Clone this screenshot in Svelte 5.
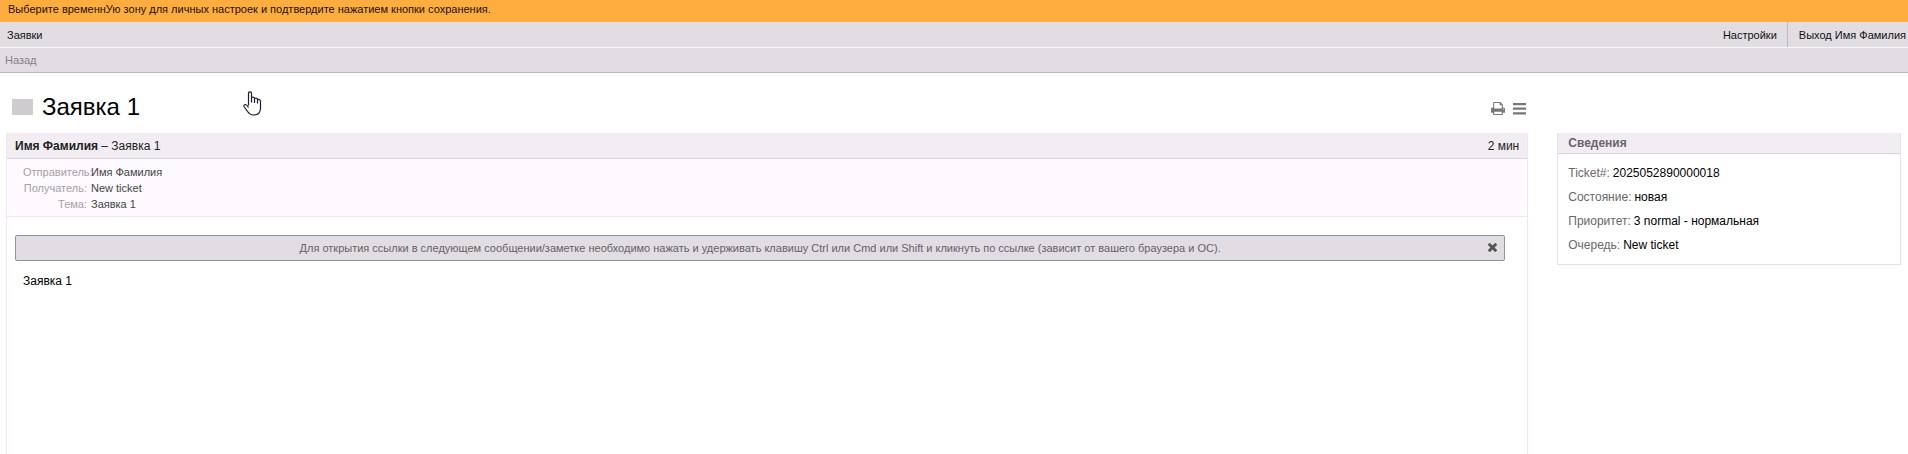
<script lang="ts">
	type Field = { label: string; value: string };

	const meta: Field[] = [
		{ label: 'Отправитель:', value: 'Имя Фамилия' },
		{ label: 'Получатель:', value: 'New ticket' },
		{ label: 'Тема:', value: 'Заявка 1' }
	];

	const details: Field[] = [
		{ label: 'Ticket#:', value: '2025052890000018' },
		{ label: 'Состояние:', value: 'новая' },
		{ label: 'Приоритет:', value: '3 normal - нормальная' },
		{ label: 'Очередь:', value: 'New ticket' }
	];

	let showHint = $state(true);
</script>

<div class="page">
	<a href="#preferences" class="notify">
		Выберите временнУю зону для личных настроек и подтвердите нажатием кнопки сохранения.
	</a>

	<nav class="nav">
		<a href="#tickets">Заявки</a>
		<div class="nav-user">
			<a href="#preferences" class="preferences">Настройки</a>
			<a href="#logout" class="logout">Выход Имя Фамилия</a>
		</div>
	</nav>

	<div class="subnav">
		<a href="#back">Назад</a>
	</div>

	<div class="content">
		<header class="title-row">
			<span class="flag"></span>
			<h1>Заявка 1</h1>
			<div class="actions">
				<button type="button" aria-label="Печать">
					<svg width="14" height="13" viewBox="64 128 1664 1536">
						<path d="M448 1536h896v-256h-896v256zm0-640h896v-384h-160q-40 0-68-28t-28-68v-160h-640v640zm1152 64q0-26-19-45t-45-19-45 19-19 45 19 45 45 19 45-19 19-45zm128 0v416q0 13-9.5 22.5t-22.5 9.5h-224v160q0 40-28 68t-68 28h-960q-40 0-68-28t-28-68v-160h-224q-13 0-22.5-9.5t-9.5-22.5v-416q0-79 56.5-135.5t135.5-56.5h64v-544q0-40 28-68t68-28h672q40 0 88 20t76 48l152 152q28 28 48 76t20 88v256h64q79 0 135.5 56.5t56.5 135.5z" />
					</svg>
				</button>
				<button type="button" aria-label="Меню">
					<svg width="13" height="13" viewBox="0 0 13 13">
						<path d="M0 1h13v2.2H0zM0 5.6h13v2.2H0zM0 10.2h13v2.2H0z" />
					</svg>
				</button>
			</div>
		</header>

		<article class="message">
			<header class="message-header">
				<span><strong>Имя Фамилия</strong> – Заявка 1</span>
				<time>2 мин</time>
			</header>
			<dl class="meta">
				{#each meta as field}
					<div>
						<dt>{field.label}</dt>
						<dd>{field.value}</dd>
					</div>
				{/each}
			</dl>
			{#if showHint}
				<div class="hint">
					<p>Для открытия ссылки в следующем сообщении/заметке необходимо нажать и удерживать клавишу Ctrl или Cmd или Shift и кликнуть по ссылке (зависит от вашего браузера и ОС).</p>
					<button type="button" aria-label="Закрыть" onclick={() => (showHint = false)}>
						<svg width="9" height="9" viewBox="302 366 1188 1188">
							<path d="M1490 1322q0 40-28 68l-136 136q-28 28-68 28t-68-28l-294-294-294 294q-28 28-68 28t-68-28l-136-136q-28-28-28-68t28-68l294-294-294-294q-28-28-28-68t28-68l136-136q28-28 68-28t68 28l294 294 294-294q28-28 68-28t68 28l136 136q28 28 28 68t-28 68l-294 294 294 294q28 28 28 68z" />
						</svg>
					</button>
				</div>
			{/if}
			<p class="body">Заявка 1</p>
		</article>

		<aside class="widget">
			<h2>Сведения</h2>
			<dl>
				{#each details as field}
					<div>
						<dt>{field.label}</dt>
						<dd>{field.value}</dd>
					</div>
				{/each}
			</dl>
		</aside>
	</div>

	<svg class="pointer" width="19" height="25" viewBox="0 0 19 25">
		<path d="M5.5 14.5V2.4Q5.5 .8 7 .8T8.500 2.400V6.500Q11.200 5.500 11.500 7.500Q14.200 6.500 14.500 8.500Q17.500 7.800 17.500 10.500V17Q17.500 24 10.500 24Q7 24 4.500 20.500L1 15.500Q.5 13.500 2.500 13.500Q4 13.700 5.500 16.500M8.500 6v5.500M11.500 7.500v4.500M14.500 8.500v4" />
	</svg>
</div>

<style>
	:global(body) {
		margin: 0;
		background: #fff;
	}

	.page {
		position: relative;
		display: flex;
		flex-direction: column;
		min-height: 100vh;
		font-family: 'Liberation Sans', Arial, sans-serif;
		font-size: 12px;
		line-height: 16px;
		color: #000;
	}

	a {
		color: inherit;
		text-decoration: none;
	}

	h1,
	h2,
	p,
	dl,
	dd {
		margin: 0;
	}

	button {
		display: flex;
		padding: 0;
		border: 0;
		background: none;
		cursor: pointer;
	}

	.notify {
		padding: 1px 8px 5px;
		background: #ffad3f;
		font-size: 11px;
		color: #1c1005;
	}

	.nav {
		display: flex;
		justify-content: space-between;
		padding-left: 7px;
		border-bottom: 1px solid #f8f6f8;
		background: #e2dde3;
		font-size: 11px;
		line-height: 24px;
		color: #111;
	}

	.nav a {
		padding-top: 1px;
	}

	.nav-user {
		display: flex;
	}

	.nav .preferences {
		padding-right: 10px;
		border-right: 1px solid #bdb9be;
	}

	.nav .logout {
		padding-left: 11px;
		padding-right: 2px;
	}

	.subnav {
		padding-left: 5px;
		border-bottom: 1px solid #bbb8bc;
		background: #e2dde3;
		font-size: 11px;
		line-height: 24px;
		color: #858087;
	}

	.content {
		flex: 1;
		display: grid;
		grid-template-columns: 31fr 7fr;
		grid-template-rows: 60px 1fr;
		column-gap: 29px;
		padding: 0 7px 0 6px;
	}

	.title-row {
		grid-column: 1;
		display: flex;
		align-items: center;
		padding: 7px 2px 0 6px;
	}

	.flag {
		width: 21px;
		height: 16px;
		margin-right: 9px;
		background: #d0cbce;
	}

	h1 {
		flex: 1;
		font-size: 24px;
		font-weight: 400;
		line-height: 28px;
	}

	.actions {
		display: flex;
		gap: 8px;
		padding-top: 4px;
		fill: #777;
	}

	.message {
		grid-column: 1;
		border: solid #eee7ef;
		border-width: 0 1px;
	}

	.message-header {
		display: flex;
		justify-content: space-between;
		padding: 1px 8px 0;
		border-bottom: 1px solid #dad5db;
		background: #f1edf2;
		line-height: 24px;
		color: #222;
	}

	.meta {
		padding: 5px 16px 4px;
		border-bottom: 1px solid #eee7ef;
		background: #fefaff;
		font-size: 11px;
		color: #444;
	}

	.meta > div {
		display: grid;
		grid-template-columns: 64px 1fr;
		column-gap: 4px;
	}

	.meta dt {
		text-align: right;
		white-space: nowrap;
		color: #a5a0a6;
	}

	.hint {
		display: flex;
		align-items: center;
		margin: 18px 22px 0 8px;
		border: 1px solid #96929a;
		border-radius: 2px;
		background: #e2dde3;
		font-size: 11px;
		line-height: 24px;
		color: #666168;
	}

	.hint p {
		flex: 1;
		padding-left: 16px;
		text-align: center;
	}

	.hint button {
		padding: 0 7px 2px 0;
		fill: #555;
	}

	.body {
		padding: 12px 16px;
	}

	.widget {
		grid-column: 2;
		align-self: start;
		border: 1px solid #e5e2e6;
		border-top: 0;
	}

	h2 {
		padding: 0 10px;
		border-bottom: 1px solid #dad5db;
		background: #f1edf2;
		font-size: 12px;
		line-height: 20px;
		color: #6b666d;
	}

	.widget dl {
		padding: 7px 10px;
		line-height: 24px;
	}

	.widget dl > div {
		display: flex;
		gap: 3px;
	}

	.widget dt {
		color: #6b666d;
	}

	/* hand cursor floating over the page */
	.pointer {
		position: absolute;
		left: 243px;
		top: 91px;
		fill: #fff;
		stroke: #1c1c2c;
		stroke-width: 1.2;
		stroke-linejoin: round;
	}
</style>
